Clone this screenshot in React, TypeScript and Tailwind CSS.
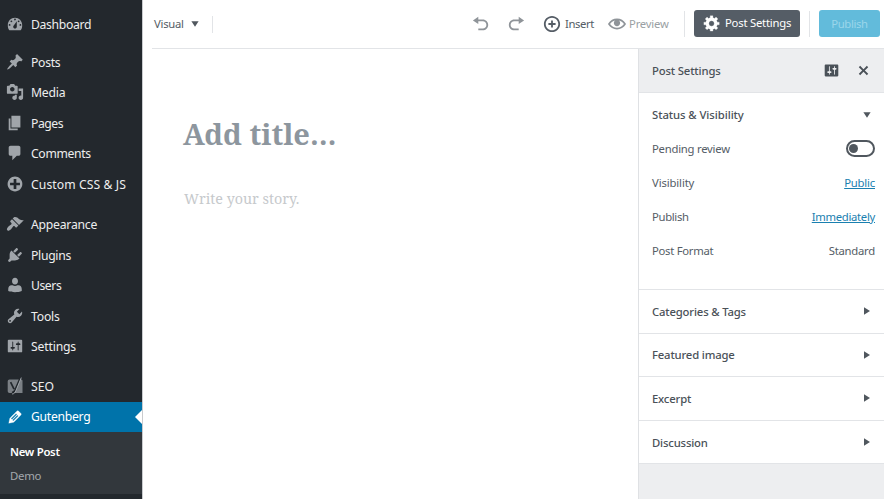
import React from "react";

const ICONS = {
  dashboard:
    "M3.76 17h12.48c1.34-1.63 1.76-3.67 1.76-6 0-4.42-3.58-8-8-8s-8 3.58-8 8c0 2.33.42 4.37 1.76 6zM10 4c.55 0 1 .45 1 1s-.45 1-1 1-1-.45-1-1 .45-1 1-1zM6 6c.55 0 1 .45 1 1s-.45 1-1 1-1-.45-1-1 .45-1 1-1zm8 0c.55 0 1 .45 1 1s-.45 1-1 1-1-.45-1-1 .45-1 1-1zm-5.37 5.55L12 7v6c0 1.1-.9 2-2 2s-2-.9-2-2c0-.57.24-1.08.63-1.45zM4 10c.55 0 1 .45 1 1s-.45 1-1 1-1-.45-1-1 .45-1 1-1zm12 0c.55 0 1 .45 1 1s-.45 1-1 1-1-.45-1-1 .45-1 1-1z",
  post: "M10.44 3.02l1.82-1.82 6.36 6.35-1.83 1.82c-1.05-.68-2.48-.57-3.41.36l-.75.75c-.92.93-1.04 2.35-.35 3.41l-1.83 1.82-2.41-2.41-2.8 2.79c-.42.42-3.38 2.71-3.8 2.29s1.86-3.39 2.28-3.81l2.79-2.79L4.1 9.36l1.83-1.82c1.05.69 2.48.57 3.4-.36l.75-.75c.93-.92 1.05-2.35.36-3.41z",
  media:
    "M13 11V4c0-.55-.45-1-1-1h-1.67L9 1H5L3.67 3H2c-.55 0-1 .45-1 1v7c0 .55.45 1 1 1h10c.55 0 1-.45 1-1zM7 4.5c1.38 0 2.5 1.12 2.5 2.5S8.38 9.5 7 9.5 4.5 8.38 4.5 7 5.62 4.5 7 4.5zM14 6h5v10.5c0 1.38-1.12 2.5-2.5 2.5S14 17.88 14 16.5s1.12-2.5 2.5-2.5c.17 0 .34.02.5.05V9h-3V6zm-4 8.05V13h2v3.5c0 1.38-1.12 2.5-2.5 2.5S7 17.88 7 16.5 8.12 14 9.5 14c.17 0 .34.02.5.05z",
  page: "M6 15V2h10v13H6zm-1 1h8v2H3V5h2v11z",
  comments:
    "M5 2h9c1.1 0 2 .9 2 2v7c0 1.1-.9 2-2 2h-2l-5 5v-5H5c-1.1 0-2-.9-2-2V4c0-1.1.9-2 2-2z",
  plus: "M15.8 4.2c3.2 3.21 3.2 8.39 0 11.6-3.21 3.2-8.39 3.2-11.6 0C1 12.59 1 7.41 4.2 4.2 7.41 1 12.59 1 15.8 4.2zm-4.3 11.3v-4h4v-3h-4v-4h-3v4h-4v3h4v4h3z",
  appearance:
    "M14.48 11.06L7.41 3.99l1.5-1.5c.5-.56 2.3-.47 3.51.32 1.21.8 1.43 1.28 2.91 2.1 1.18.64 2.45 1.26 4.45.85zm-.71.71L6.7 4.7 4.93 6.47c-.39.39-.39 1.02 0 1.41l1.06 1.06c.39.39.39 1.03 0 1.42-.6.6-1.43 1.11-2.21 1.69-.35.26-.7.53-1.01.84C1.43 14.23.4 16.08 1.4 17.07c.99 1 2.84-.03 4.18-1.36.31-.31.58-.66.85-1.02.57-.78 1.08-1.61 1.69-2.21.39-.39 1.02-.39 1.41 0l1.06 1.06c.39.39 1.02.39 1.41 0z",
  plugins:
    "M13.11 4.36L9.87 7.6 8 5.73l3.24-3.24c.35-.34 1.05-.2 1.56.32.52.51.66 1.21.31 1.55zm-8 1.77l.91-1.12 9.01 9.01-1.19.84c-.71.71-2.63 1.16-3.82 1.16H6.14L4.9 17.26c-.59.59-1.54.59-2.12 0-.59-.58-.59-1.53 0-2.12l1.24-1.24v-3.88c0-1.13.4-3.19 1.09-3.89zm7.26 3.97l3.24-3.24c.34-.35 1.04-.21 1.55.31.52.51.66 1.21.31 1.55l-3.24 3.25z",
  users:
    "M10 9.4c-2.200 0-3.300-1.800-3.300-3.700C6.700 3.600 8 2 10 2s3.300 1.600 3.300 3.700c0 1.900-1.100 3.700-3.300 3.700zM6 10.300h1.400c.8.5 1.700.8 2.600.8s1.800-.3 2.600-.8H14c2 0 3.500 1.900 3.500 4.200v2.300c-2 .9-4.700 1.300-7.500 1.300s-5.500-.4-7.500-1.300v-2.300c0-2.300 1.500-4.200 3.500-4.200z",
  tools:
    "M16.68 9.77c-1.34 1.34-3.3 1.67-4.95.99l-5.41 6.52c-.99.99-2.59.99-3.58 0s-.99-2.59 0-3.57l6.52-5.42c-.68-1.65-.35-3.61.99-4.95 1.28-1.28 3.12-1.62 4.72-1.06l-2.89 2.89 2.82 2.82 2.86-2.87c.53 1.58.18 3.39-1.08 4.65zM3.81 16.21c.4.39 1.04.39 1.43 0 .4-.4.4-1.04 0-1.43-.39-.4-1.03-.4-1.43 0-.39.39-.39 1.03 0 1.43z",
  settings:
    "M18 16V4c0-.55-.45-1-1-1H3c-.55 0-1 .45-1 1v12c0 .55.45 1 1 1h14c.55 0 1-.45 1-1zM8 11h1c.55 0 1 .45 1 1s-.45 1-1 1H8v1.5c0 .28-.22.5-.5.5s-.5-.22-.5-.5V13H6c-.55 0-1-.45-1-1s.45-1 1-1h1V5.5c0-.28.22-.5.5-.5s.5.22.5.5V11zm5-2h-1c-.55 0-1-.45-1-1s.45-1 1-1h1V5.5c0-.28.22-.5.5-.5s.5.22.5.5V7h1c.55 0 1 .45 1 1s-.45 1-1 1h-1v5.5c0 .28-.22.5-.5.5s-.5-.22-.5-.5V9z",
  edit: "M13.89 3.39l2.71 2.72c.46.46.42 1.24.03 1.64l-8.01 8.02-5.56 1.16 1.16-5.58s7.6-7.63 7.99-8.03c.39-.39 1.22-.39 1.68.07zm-2.73 2.79l-5.59 5.61 1.11 1.11 5.54-5.65zm-2.97 8.23l5.58-5.6-1.07-1.08-5.59 5.6z",
  undo: "M12 5H7V2L1 6l6 4V7h5c2.2 0 4 1.8 4 4s-1.8 4-4 4H7v2h5c3.3 0 6-2.7 6-6s-2.7-6-6-6z",
  redo: "M8 5h5V2l6 4-6 4V7H8c-2.2 0-4 1.8-4 4s1.8 4 4 4h5v2H8c-3.3 0-6-2.7-6-6s2.7-6 6-6z",
  insert:
    "M10 1c-5 0-9 4-9 9s4 9 9 9 9-4 9-9-4-9-9-9zm0 16c-3.9 0-7-3.1-7-7s3.1-7 7-7 7 3.1 7 7-3.1 7-7 7zm1-11H9v3H6v2h3v3h2v-3h3V9h-3V6z",
  eye: "M19.7 9.4C17.7 6 14 3.9 10 3.9S2.3 6 .3 9.4L0 10l.3.6c2 3.4 5.7 5.5 9.7 5.5s7.7-2.1 9.7-5.5l.3-.6-.3-.6zM10 14.1c-3.1 0-6-1.6-7.7-4.1C3.6 8 5.7 6.6 8 6.1c-.9.6-1.5 1.7-1.5 2.9 0 1.9 1.6 3.5 3.5 3.5s3.5-1.6 3.5-3.5c0-1.2-.6-2.3-1.5-2.9 2.3.5 4.4 1.9 5.7 3.9-1.7 2.5-4.6 4.1-7.7 4.1z",
  gear: "M18 12h-2.18c-.17.7-.44 1.35-.81 1.93l1.54 1.54-2.1 2.1-1.54-1.54c-.58.36-1.23.63-1.91.79V19H8v-2.18c-.68-.16-1.33-.43-1.91-.79l-1.54 1.54-2.12-2.12 1.54-1.54c-.36-.58-.63-1.23-.79-1.91H1V9.03h2.17c.16-.7.44-1.35.8-1.94L2.43 5.55l2.1-2.1 1.54 1.54c.58-.37 1.24-.64 1.93-.81V2h3v2.18c.68.16 1.33.43 1.91.79l1.54-1.54 2.12 2.12-1.54 1.54c.36.59.64 1.24.8 1.94H18V12zm-8.5 1.5c1.66 0 3-1.34 3-3s-1.34-3-3-3-3 1.34-3 3 1.34 3 3 3z",
  close:
    "M14.95 6.46L11.41 10l3.54 3.54-1.41 1.41L10 11.42l-3.53 3.53-1.42-1.42L8.58 10 5.05 6.47l1.42-1.42L10 8.58l3.54-3.53z",
};

type IconName = keyof typeof ICONS;

function Icon({ name, className = "size-[18px]" }: { name: IconName; className?: string }) {
  return (
    <svg viewBox="0 0 20 20" fill="currentColor" className={`shrink-0 ${className}`}>
      <path d={ICONS[name]} />
    </svg>
  );
}

function SeoIcon() {
  return (
    <svg viewBox="0 0 18 18" className="size-[18px] shrink-0">
      <path d="M3.5 2.5h12A1.5 1.5 0 0 1 16.500 4v12h-13a1.800 1.800 0 0 1-1.800-1.800V4.300a1.800 1.800 0 0 1 1.800-1.800z" fill="#7b8085" />
      <path d="M4.600 5.200 8 12.200M14.200 1 9 13.200c-.7 1.600-1.600 2.300-3.100 2.400" fill="none" stroke="#23282d" strokeWidth="1.700" />
      <path d="M15.300.6 9.800 14c-.7 1.700-1.700 2.900-3.700 3" fill="none" stroke="#a0a5aa" strokeWidth="1" />
    </svg>
  );
}

function MenuItem({ icon, label, className }: { icon: IconName; label: string; className: string }) {
  return (
    <a className="flex h-[30.5px] items-center gap-[7px] pl-[6px] text-[#eeeeee]">
      <Icon name={icon} className="size-[18px] text-[#a0a5aa]" />
      <span className={`pt-[2px] whitespace-nowrap ${className}`}>{label}</span>
    </a>
  );
}

function Sidebar() {
  return (
    <nav className="flex w-[142px] shrink-0 flex-col bg-[#23282d] pt-[9px] text-[12.2px] leading-[18px]">
      <MenuItem icon="dashboard" label="Dashboard" className="tracking-[-0.34px]" />
      <div className="mt-[7px]">
        <MenuItem icon="post" label="Posts" className="tracking-[-0.28px]" />
        <MenuItem icon="media" label="Media" className="tracking-[-0.2px]" />
        <MenuItem icon="page" label="Pages" className="tracking-[-0.45px]" />
        <MenuItem icon="comments" label="Comments" className="tracking-[-0.34px]" />
        <MenuItem icon="plus" label="Custom CSS & JS" className="tracking-[0.08px]" />
      </div>
      <div className="mt-[10px]">
        <MenuItem icon="appearance" label="Appearance" className="tracking-[-0.23px]" />
        <MenuItem icon="plugins" label="Plugins" className="tracking-[-0.3px]" />
        <MenuItem icon="users" label="Users" className="tracking-[-0.44px]" />
        <MenuItem icon="tools" label="Tools" className="tracking-[-0.2px]" />
        <MenuItem icon="settings" label="Settings" className="tracking-[-0.17px]" />
      </div>
      <a className="mt-[9.5px] flex h-[30.5px] items-center gap-[7px] pl-[6px] text-[#eeeeee]">
        <SeoIcon />
        <span className="pt-[2px] tracking-[0.05px]">SEO</span>
      </a>
      <a className="flex h-[30.5px] items-center bg-[#0073aa] pl-[6px] text-white">
        <svg viewBox="0 0 20 20" className="size-[18px] shrink-0 fill-white stroke-white stroke-[0.3]">
          <path d={ICONS.edit} />
        </svg>
        <span className="ml-[7px] pt-px tracking-[-0.28px]">Gutenberg</span>
        <svg viewBox="0 0 7 14" className="ml-auto h-[14px] w-[7px]">
          <path d="M7 0v14L0 7z" fill="#fff" />
        </svg>
      </a>
      <div className="flex flex-col bg-[#32373c] pt-[6.5px] pb-[5px] pl-[10px] text-[11.4px] leading-[25px]">
        <a className="font-semibold tracking-[-0.3px] text-white">New Post</a>
        <a className="-mt-px mb-px tracking-[-0.3px] text-[#a3a8ad]">Demo</a>
      </div>
    </nav>
  );
}

function Toolbar() {
  return (
    <header className="ml-[9px] flex h-[49px] shrink-0 items-center border-b border-[#e2e4e7] text-[11.3px] text-[#555d66]">
      <span className="ml-[2px] w-[30px] tracking-[-0.27px]">Visual</span>
      <svg viewBox="0 0 8 6" className="ml-[7px] h-[6px] w-[8px]">
        <path d="M0.400 0.300h7.200L4 5.800z" fill="#50575e" />
      </svg>
      <div className="ml-[13px] h-[17px] w-px bg-[#e2e4e7]" />
      <Icon name="undo" className="ml-[259px] size-[18px] text-[#8f9499]" />
      <Icon name="redo" className="ml-[17px] size-[18px] text-[#8f9499]" />
      <Icon name="insert" className="ml-[18px] size-[18px] text-[#555d66]" />
      <span className="ml-[4px] w-[29px] tracking-[-0.4px]">Insert</span>
      <Icon name="eye" className="ml-[14px] size-[18px] text-[#8f9499]" />
      <span className="ml-[3px] tracking-[-0.2px] text-[#9a9fa4]">Preview</span>
      <div className="ml-auto h-[26px] w-px bg-[#e2e4e7]" />
      <button className="mb-[2px] ml-[9px] flex h-[27px] w-[106px] items-center rounded-[3px] bg-[#555d66] pl-[9px] text-white">
        <svg viewBox="0 0 20 20" className="size-[18px] shrink-0 fill-white stroke-white stroke-[0.3]">
          <path d={ICONS.gear} />
        </svg>
        <span className="ml-[4px] pt-px tracking-[-0.23px] whitespace-nowrap">Post Settings</span>
      </button>
      <div className="ml-[9px] h-[26px] w-px bg-[#e2e4e7]" />
      <button className="mr-[4px] mb-[2px] ml-[9px] h-[27px] w-[61px] rounded-[3px] bg-[#62bbdb] pt-[2px] tracking-[-0.37px] text-[#9ad6ea]">
        Publish
      </button>
    </header>
  );
}

function Row({ label, className, children }: { label: string; className: string; children: React.ReactNode }) {
  return (
    <div className="flex h-[34px] items-center justify-between">
      <span className={className}>{label}</span>
      {children}
    </div>
  );
}

function ClosedPanel({ title }: { title: string }) {
  return (
    <div className="flex h-[43.6px] items-center justify-between border-b border-[#e2e4e7] pr-[14px] pl-[13px] font-medium tracking-[-0.17px]">
      <span className="pt-[2px]">{title}</span>
      <svg viewBox="0 0 6 8" className="h-[8px] w-[6px]">
        <path d="M0 0.300v7.400l6-3.700z" fill="#50575e" />
      </svg>
    </div>
  );
}

function SettingsPanel() {
  return (
    <aside className="flex w-[246px] shrink-0 flex-col border-l border-[#dfe1e4] bg-[#edeef0] text-[11.3px] text-[#555d66]">
      <div className="flex h-[44px] shrink-0 items-center border-b border-[#e2e4e7] pr-[11px] pl-[13px] font-medium text-[#4a5158]">
        <span className="pt-px tracking-[-0.15px]">Post Settings</span>
        <Icon name="settings" className="ml-auto size-[17px]" />
        <Icon name="close" className="ml-[14px] size-[19px]" />
      </div>
      <section className="h-[197px] shrink-0 border-b border-[#e2e4e7] bg-white pt-[5px] pr-[9px] pl-[13px]">
        <div className="flex h-[34px] items-center justify-between pr-[4px] font-medium text-[#4a5158]">
          <span className="pt-px tracking-[-0.07px]">Status &amp; Visibility</span>
          <svg viewBox="0 0 8 6" className="h-[6px] w-[8px]">
            <path d="M0.400 0.300h7.200L4 5.800z" fill="#50575e" />
          </svg>
        </div>
        <Row label="Pending review" className="pt-px tracking-[-0.24px]">
          <span className="mb-px flex h-[17px] w-[29px] items-center rounded-full border-2 border-[#50575e] pl-[1px]">
            <span className="size-[9px] rounded-full bg-[#50575e]" />
          </span>
        </Row>
        <Row label="Visibility" className="pt-px tracking-[-0.13px]">
          <a className="pt-px tracking-[-0.2px] text-[#1a80b0] underline">Public</a>
        </Row>
        <Row label="Publish" className="pt-px tracking-[-0.33px]">
          <a className="pt-px tracking-[-0.31px] text-[#1a80b0] underline">Immediately</a>
        </Row>
        <Row label="Post Format" className="pt-px tracking-[-0.28px]">
          <span className="pt-px tracking-[-0.25px]">Standard</span>
        </Row>
      </section>
      <div className="bg-white text-[#4a5158]">
        <ClosedPanel title="Categories & Tags" />
        <ClosedPanel title="Featured image" />
        <ClosedPanel title="Excerpt" />
        <ClosedPanel title="Discussion" />
      </div>
    </aside>
  );
}

export default function App() {
  return (
    <div className="flex h-[499px] w-[884px] overflow-hidden bg-white font-['Noto_Sans','Open_Sans',sans-serif]">
      <Sidebar />
      <div className="flex min-w-0 flex-1 flex-col border-l border-[#c9cbce]">
        <Toolbar />
        <div className="flex min-h-0 flex-1">
          <main className="flex-1 pl-[41px] font-['Noto_Serif','DejaVu_Serif_Condensed','DejaVu_Serif',serif]">
            <h1 className="-ml-px mt-[64px] text-[29px] leading-[42px] font-bold text-[#8d969e]">Add title…</h1>
            <p className="mt-[33px] text-[14.3px] leading-[22px] text-[#c6c9cc]">Write your story.</p>
          </main>
          <SettingsPanel />
        </div>
      </div>
    </div>
  );
}
